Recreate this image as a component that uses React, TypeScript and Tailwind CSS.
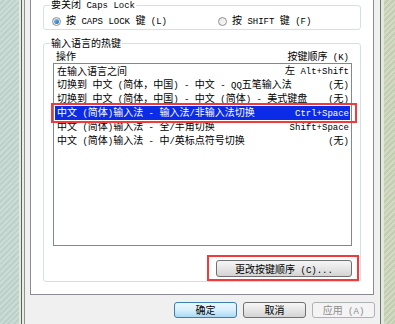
import React from "react";

// split mixed text: ASCII runs are drawn in a mono face, like SimSun's half-width glyphs
const T = ({ s }: { s: string }) => (
  <>
    {s.split(/([\x20-\x7e]+)/).map((p, i) =>
      /^[\x20-\x7e]+$/.test(p) ? (
        <span key={i} className="font-['Liberation_Mono',monospace] text-[9px] leading-[12px]">
          {p}
        </span>
      ) : (
        <React.Fragment key={i}>{p}</React.Fragment>
      )
    )}
  </>
);

const rows = [
  { a: "在输入语言之间", k: "左 Alt+Shift" },
  { a: "切换到 中文 (简体，中国) - 中文 - QQ五笔输入法", k: "(无)" },
  { a: "切换到 中文 (简体，中国) - 中文 (简体) - 美式键盘", k: "(无)" },
  { a: "中文 (简体)输入法 - 输入法/非输入法切换", k: "Ctrl+Space", sel: true },
  { a: "中文 (简体)输入法 - 全/半角切换", k: "Shift+Space" },
  { a: "中文 (简体)输入法 - 中/英标点符号切换", k: "(无)" },
];

const Radio = ({ on }: { on?: boolean }) => (
  <span className="w-[9px] h-[9px] rounded-full border border-[#8e8f8f] bg-gradient-to-br from-[#e6e6e6] to-[#fbfbfb] flex items-center justify-center shrink-0">
    {on && <span className="w-[5px] h-[5px] rounded-full bg-gradient-to-br from-[#7fd0ff] to-[#1a5fb4]" />}
  </span>
);

const stripe =
  "bg-[repeating-linear-gradient(135deg,#cadcd6_0px,#cadcd6_2px,#bdd1ca_2px,#bdd1ca_4px)]";

export default function App() {
  return (
    <div className="w-[395px] h-[324px] overflow-hidden flex text-[10px] leading-[12px] text-black font-['Noto_Sans_CJK_SC',sans-serif]">
      <div className={`w-[19px] shrink-0 ${stripe}`} />
      <div className="w-[2px] shrink-0 bg-[#e2eadc]" />
      <div className="w-px shrink-0 bg-[#58625e]" />
      <div className="w-[2px] shrink-0 bg-[#e9eee4]" />
      <div className="w-px shrink-0 bg-[#8c9290]" />

      <div className="w-[355px] shrink-0 bg-[#f0f0f0] flex flex-col">
        {/* tab page */}
        <div className="ml-[5px] w-[344px] h-[295px] bg-white border-x border-b border-[#898c95] flex flex-col pl-[12px]">
          <fieldset className="-mt-[2px] w-[318px] h-[32px] border border-[#d5dfe5] rounded-[3px] px-[6px]">
            <legend className="px-[1px] leading-[12px]">
              <T s="要关闭 Caps Lock" />
            </legend>
            <div className="flex items-center h-[12px] mt-[3px] pl-[2px]">
              <Radio on />
              <span className="ml-[5px] w-[152px]">
                <T s="按 CAPS LOCK 键 (L)" />
              </span>
              <Radio />
              <span className="ml-[5px]">
                <T s="按 SHIFT 键 (F)" />
              </span>
            </div>
          </fieldset>

          <fieldset className="mt-[7px] w-[318px] h-[245px] border border-[#d5dfe5] rounded-[3px] pl-[9px] pr-[8px] relative">
            <legend className="ml-[-3px] px-[1px] leading-[12px]">输入语言的热键</legend>
            <div className="flex justify-between h-[12px] mt-[1px] px-[3px]">
              <span>操作</span>
              <span>
                <T s="按键顺序 (K)" />
              </span>
            </div>
            <div className="relative mt-[1px] h-[183px] border border-[#828790] bg-white py-0">
              {rows.map((r, i) => (
                <div
                  key={i}
                  className={`flex justify-between items-center h-[14px] pl-[2px] pr-[1px] mx-[1px] whitespace-nowrap ${
                    r.sel ? "bg-[#0c2be6] text-white" : ""
                  }`}
                >
                  <span>
                    <T s={r.a} />
                  </span>
                  <span>
                    <T s={r.k} />
                  </span>
                </div>
              ))}
              <div className="absolute left-[-3px] right-[-6px] top-[39px] h-[20px] border-2 border-[#f23a3a]" />
            </div>
            <div className="relative flex justify-end mt-[14px]">
              <button className="w-[136px] h-[17px] border border-[#707070] rounded-[3px] bg-gradient-to-b from-[#f6f6f6] via-[#e6e6e6] to-[#d4d4d4] leading-[15px]">
                <T s="更改按键顺序 (C)..." />
              </button>
              <div className="absolute left-[154px] right-[-7px] top-[-5px] h-[26px] border-2 border-[#f23a3a]" />
            </div>
          </fieldset>
        </div>

        {/* dialog buttons */}
        <div className="flex justify-end gap-[6px] mt-[7px] pr-[5px]">
          <button className="w-[63px] h-[16px] border border-[#3c7fb1] rounded-[3px] bg-gradient-to-b from-[#eaf6fd] via-[#d9f0fc] to-[#a7d9f5] leading-[14px]">
            确定
          </button>
          <button className="w-[63px] h-[16px] border border-[#707070] rounded-[3px] bg-gradient-to-b from-[#f6f6f6] via-[#e6e6e6] to-[#d4d4d4] leading-[14px]">
            取消
          </button>
          <button className="w-[63px] h-[16px] border border-[#adb2b5] rounded-[3px] bg-[#f4f4f4] text-[#8d8d8d] leading-[14px]">
            <T s="应用 (A)" />
          </button>
        </div>
      </div>

      <div className="w-px shrink-0 bg-[#6b7370]" />
      <div className="w-[3px] shrink-0 bg-[#e3e9da]" />
      <div className="flex-1 bg-[repeating-linear-gradient(135deg,#d2dac4_0px,#d2dac4_2px,#c3cdb4_2px,#c3cdb4_4px)]" />
    </div>
  );
}
